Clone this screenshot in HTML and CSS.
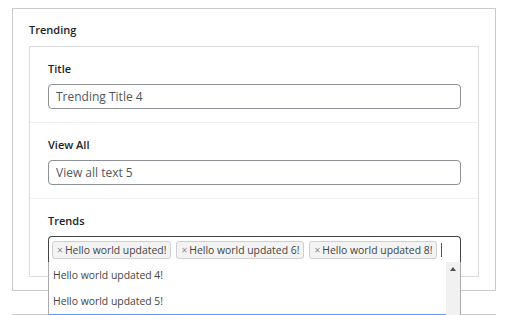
FILE: index.html
```html
<!DOCTYPE html>
<html>
<head>
<meta charset="utf-8">
<link rel="stylesheet" href="styles.css">
</head>
<body>
<div class="page">
  <div class="group">
    <div class="group-label">Trending</div>
    <div class="fields">
      <div class="field">
        <div class="field-label">Title</div>
        <input class="text-input" type="text" value="Trending Title 4">
      </div>
      <div class="field">
        <div class="field-label">View All</div>
        <input class="text-input" type="text" value="View all text 5">
      </div>
      <div class="field">
        <div class="field-label">Trends</div>
        <div class="select">
          <div class="selection">
            <span class="tag"><span class="tag-x">×</span> Hello world updated!</span>
            <span class="tag"><span class="tag-x">×</span> Hello world updated 6!</span>
            <span class="tag"><span class="tag-x">×</span> Hello world updated 8!</span>
            <span class="caret"></span>
          </div>
          <div class="dropdown">
            <div class="options">
              <div class="option">Hello world updated 4!</div>
              <div class="option">Hello world updated 5!</div>
              <div class="option active"></div>
            </div>
            <div class="scrollbar"><span class="arrow"></span></div>
          </div>
        </div>
      </div>
    </div>
  </div>
  <div class="group next"></div>
</div>
</body>
</html>
```
FILE: styles.css
```css
html, body {
  margin: 0;
  padding: 0;
  background: #fff;
  overflow: hidden;
  height: 315px;
}
body {
  font-family: "Open Sans", "Noto Sans", sans-serif;
  color: #1d2327;
}
.page {
  padding: 8px 0 0 12px;
  width: 484px;
}
.group {
  border: 1px solid #c9c9c9;
  padding: 14px 16px 13px 16px;
}
.group.next {
  margin-top: 23px;
  height: 40px;
  padding: 0;
}
.group-label {
  font-size: 11px;
  font-weight: 600;
  line-height: 14px;
  margin-bottom: 9px;
  color: #1d2327;
}
.fields {
  border: 1px solid #dcdcde;
}
.field {
  padding: 15px 17px 13px 18px;
  border-top: 1px solid #f0f0f1;
}
.field:first-child {
  border-top: none;
}
.field-label {
  font-size: 11px;
  font-weight: 600;
  line-height: 14px;
  margin-bottom: 8px;
}
.text-input {
  display: block;
  box-sizing: border-box;
  width: 413px;
  height: 25px;
  margin: 0;
  border: 1px solid #8c8f94;
  border-radius: 4px;
  padding: 0 7px;
  font-family: "Open Sans", "Noto Sans", sans-serif;
  font-size: 12px;
  color: #50575e;
  background: #fff;
}
.select {
  position: relative;
  width: 413px;
}
.selection {
  box-sizing: border-box;
  height: 27px;
  border: 1px solid #444;
  border-bottom-color: #aaa;
  border-radius: 4px 4px 0 0;
  display: flex;
  align-items: center;
  gap: 5px;
  padding: 0 0 0 3px;
}
.tag {
  display: inline-flex;
  align-items: center;
  box-sizing: border-box;
  height: 18px;
  padding: 0 4px;
  border: 1px solid #cfcfcf;
  border-radius: 3px;
  background: #f3f3f3;
  font-size: 10.4px;
  color: #444;
  white-space: nowrap;
}
.tag-x {
  color: #888;
  margin-right: 2px;
}
.caret {
  width: 1px;
  height: 14px;
  background: #555;
  margin-left: -1px;
}
.dropdown {
  position: absolute;
  left: 0;
  top: 26px;
  width: 413px;
  box-sizing: border-box;
  border: 1px solid #aaa;
  border-top: none;
  background: #fff;
  display: flex;
  height: 80px;
}
.options {
  flex: 1;
}
.option {
  height: 26px;
  line-height: 26px;
  padding-left: 4px;
  font-size: 10.4px;
  color: #444;
}
.option.active {
  background: #5897fb;
  height: 20px;
}
.scrollbar {
  width: 14px;
  background: #f1f1f1;
  position: relative;
}
.arrow {
  position: absolute;
  left: 4px;
  top: 5px;
  width: 0;
  height: 0;
  border-left: 3px solid transparent;
  border-right: 3px solid transparent;
  border-bottom: 4px solid #505050;
}
```
